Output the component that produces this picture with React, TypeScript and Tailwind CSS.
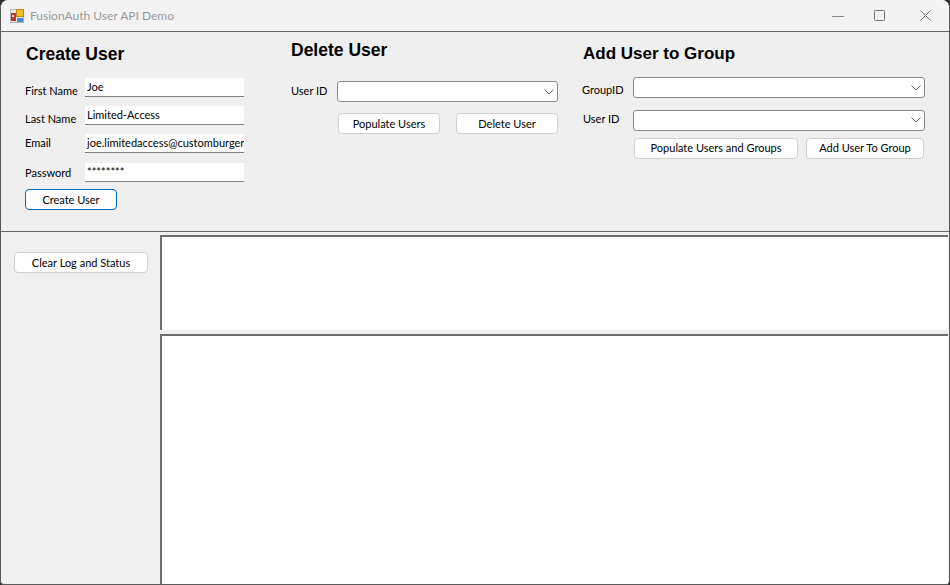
const ui = "font-['Lato',sans-serif] text-[11px] text-black"
const heading = "font-['Liberation_Sans',sans-serif] font-bold text-[17.5px] leading-5 text-black"

const Btn = ({ label, className = "border-[#d0d0d0]" , width }: { label: string; className?: string; width: string }) => (
  <button className={`h-[21px] shrink-0 rounded-[4px] border bg-white text-center leading-[18px] ${width} ${className}`}>
    {label}
  </button>
)

const Field = ({ value }: { value: string }) => (
  <div className="h-[19px] w-[159px] overflow-hidden whitespace-nowrap border-b border-b-[#808080] bg-white pl-[2px] leading-[17px]">
    {value}
  </div>
)

const Combo = ({ className = "" }: { className?: string }) => (
  <div className={`flex h-[21px] items-center justify-end rounded-[3px] border border-[#8a8a8a] bg-white pr-[3px] ${className}`}>
    <svg width="10" height="6" viewBox="0 0 10 6" fill="none" stroke="#606060" strokeWidth="1">
      <path d="M0.5 0.5 L5 5 L9.5 0.5" />
    </svg>
  </div>
)

const AppIcon = () => (
  <svg width="14" height="14" viewBox="0 0 14 14" className="shrink-0">
    <rect x="0.5" y="0.5" width="13" height="13" fill="#e8e8e8" stroke="#b5b5b5" />
    <rect x="1" y="4" width="5" height="8" fill="#c0362c" />
    <rect x="2" y="6" width="2" height="2" fill="#f3d0c8" />
    <rect x="6.5" y="0.5" width="7" height="7" fill="#f2b92e" stroke="#b98a17" />
    <rect x="7" y="9" width="6" height="4" fill="#4a86d8" />
  </svg>
)

export default function App() {
  return (
    <div className="h-[585px] w-[950px] overflow-hidden bg-[#2e2e2e]">
      <div className={`flex h-full flex-col overflow-hidden rounded-t-[8px] rounded-b-[4px] border-x border-b border-[#5a5a5a] bg-[#f0f0f0] ${ui}`}>
        {/* title bar */}
        <div className="flex h-[31px] shrink-0 items-center bg-[#f3f3f3] pl-[9px]">
          <AppIcon />
          <span className="ml-[6px] text-[12px] text-[#9a9a9a]">FusionAuth User API Demo</span>
          <div className="ml-auto flex items-center pr-[18px]">
            <svg width="10" height="10" viewBox="0 0 10 10" className="mr-[30px]" stroke="#8a8a8a" fill="none" overflow="visible">
              <path d="M-2 5.5 H10" />
            </svg>
            <svg width="11" height="11" viewBox="0 0 11 11" className="mr-[35px]" stroke="#707070" fill="none">
              <rect x="0.5" y="0.5" width="10" height="10" rx="1" />
            </svg>
            <svg width="11" height="11" viewBox="0 0 11 11" stroke="#707070" fill="none">
              <path d="M0.5 0.5 L10.5 10.5 M10.5 0.5 L0.5 10.5" />
            </svg>
          </div>
        </div>

        {/* forms */}
        <div className="flex h-[201px] shrink-0 border-y border-[#666] bg-[#efefef]">
          <div className="w-[266px] shrink-0 pl-[24px] pt-[12px]">
            <h2 className={`${heading} pl-px`}>Create User</h2>
            <div className="mt-[14px] flex h-[28px] items-start">
              <span className="mt-[5px] w-[60px]">First Name</span>
              <Field value="Joe" />
            </div>
            <div className="flex h-[28px] items-start">
              <span className="mt-[5px] w-[60px]">Last Name</span>
              <Field value="Limited-Access" />
            </div>
            <div className="flex h-[29px] items-start">
              <span className="mt-[1px] w-[60px]">Email</span>
              <Field value="joe.limitedaccess@customburger" />
            </div>
            <div className="flex h-[26px] items-start">
              <span className="mt-[2px] w-[60px]">Password</span>
              <Field value="********" />
            </div>
            <Btn label="Create User" width="w-[92px]" className="border-[#0067c0]" />
          </div>

          <div className="w-[291px] shrink-0 pl-[24px] pt-[8px]">
            <h2 className={heading}>Delete User</h2>
            <div className="mt-[21px] flex items-center">
              <span className="w-[46px]">User ID</span>
              <Combo className="w-[222px]" />
            </div>
            <div className="ml-[47px] mt-[11px] flex gap-[16px]">
              <Btn label="Populate Users" width="w-[102px]" />
              <Btn label="Delete User" width="w-[102px]" />
            </div>
          </div>

          <div className="flex-1 pl-[24px] pt-[12px]">
            <h2 className={`${heading} pl-px text-[17px]`}>Add User to Group</h2>
            <div className="mt-[13px] flex items-start">
              <span className="mt-[5px] w-[51px]">GroupID</span>
              <Combo className="w-[292px]" />
            </div>
            <div className="mt-[11px] flex items-start">
              <span className="mt-[1px] w-[51px] pl-px">User ID</span>
              <Combo className="w-[292px]" />
            </div>
            <div className="ml-[52px] mt-[7px] flex gap-[8px]">
              <Btn label="Populate Users and Groups" width="w-[164px]" />
              <Btn label="Add User To Group" width="w-[118px]" />
            </div>
          </div>
        </div>

        {/* log and status */}
        <div className="flex min-h-0 flex-1 pt-[3px]">
          <div className="w-[159px] shrink-0 pl-[13px] pt-[17px]">
            <Btn label="Clear Log and Status" width="w-[134px]" />
          </div>
          <div className="flex flex-1 flex-col gap-[4px] pr-px">
            <div className="h-[95px] shrink-0 border-l-2 border-t-2 border-[#6e6e6e] bg-white" />
            <div className="flex-1 border-l-2 border-t-2 border-[#6e6e6e] bg-white" />
          </div>
        </div>
      </div>
    </div>
  )
}
